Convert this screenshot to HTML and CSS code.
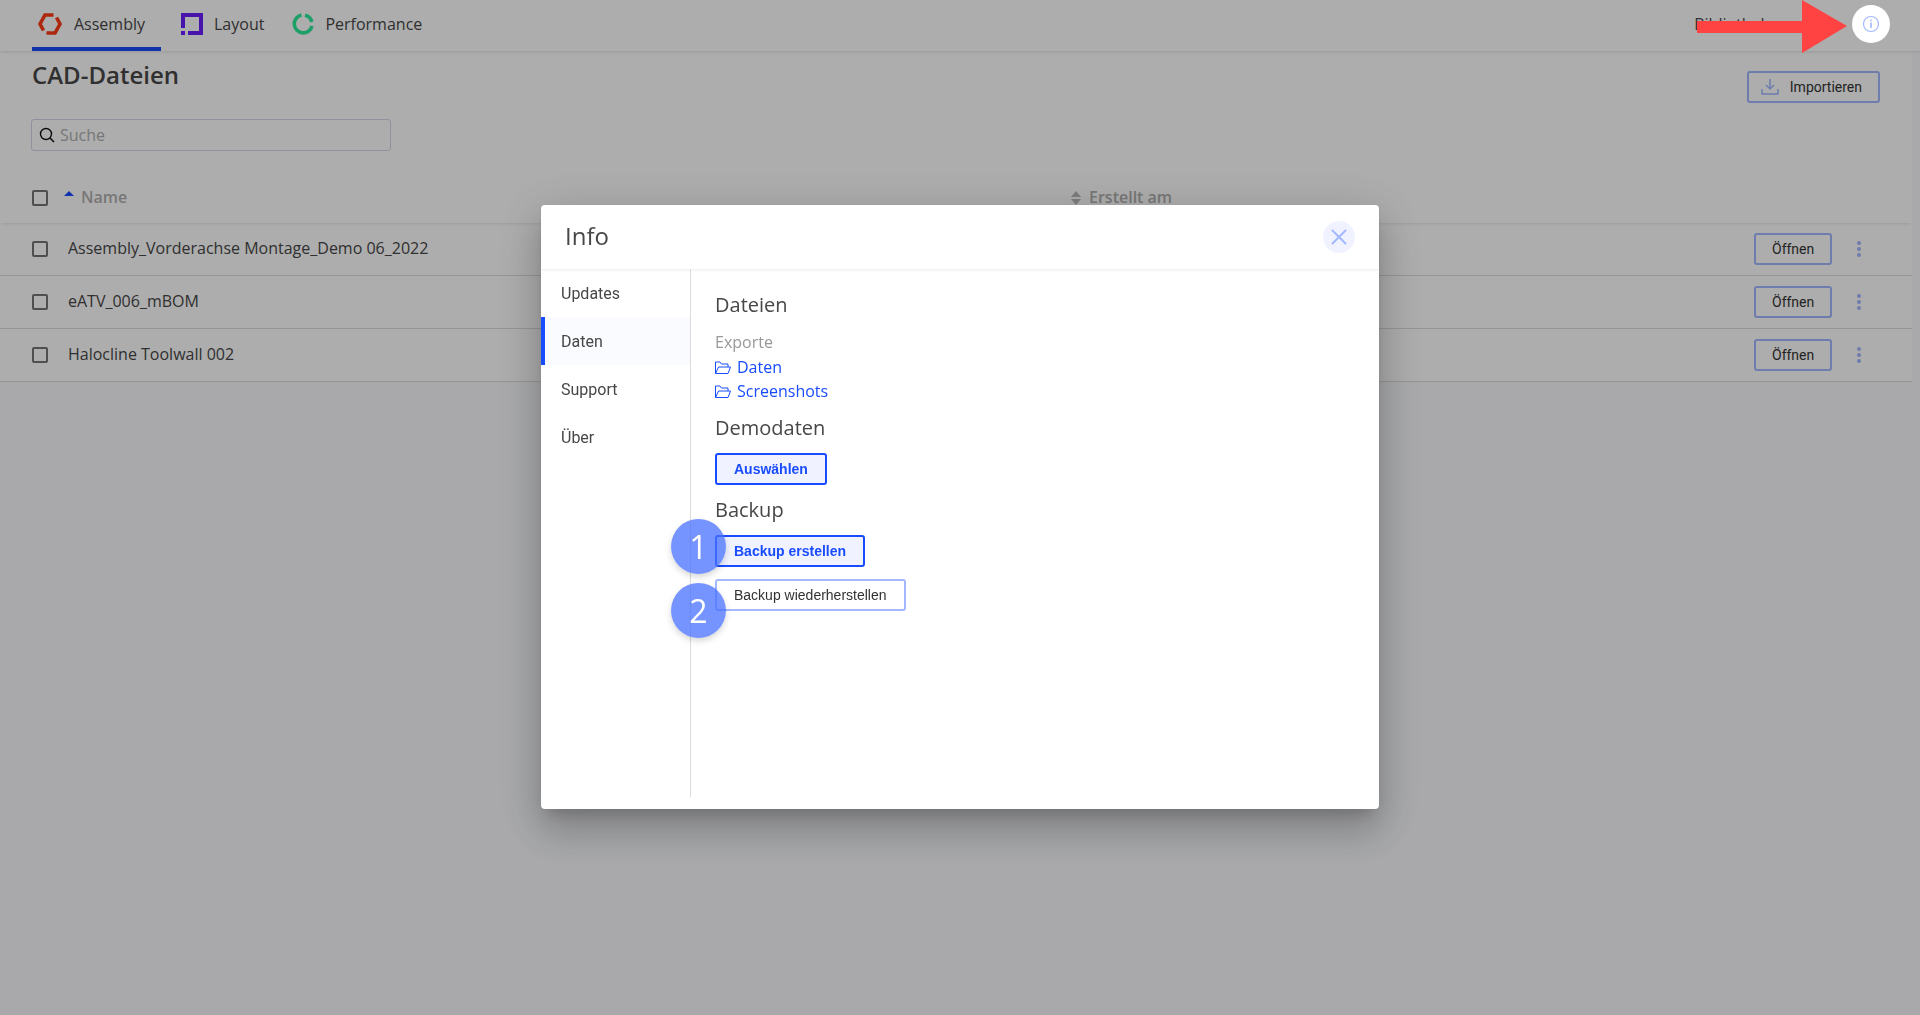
FILE: index.html
```html
<!DOCTYPE html>
<html lang="de">
<head>
<meta charset="utf-8">
<title>CAD-Dateien</title>
<link rel="stylesheet" href="styles.css">
</head>
<body>
<svg class="sprite" aria-hidden="true">
  <symbol id="folder" viewBox="0 0 16 16"><path d="M.5 14.500V3h4.500l1.500 2h6.500v3M.5 14.500l3-6.500h12l-2.500 6.500z" fill="none" stroke="currentColor" stroke-linejoin="round"/></symbol>
</svg>
<header class="topbar">
  <nav class="tabs">
    <a class="tab tab-active" href="#assembly">
      <svg class="tab-icon" width="26" height="24" viewBox="0 0 26 24"><path d="M16.500 3H8L3 12l3.500 6.500" fill="none" stroke="#ff3a15" stroke-width="3.600"/><path d="M9.500 21H18l5-9-3.500-6.500" fill="none" stroke="#ff3a15" stroke-width="3.600"/></svg>
      Assembly
    </a>
    <a class="tab" href="#layout">
      <svg class="tab-icon" width="22" height="22" viewBox="0 0 22 22"><path d="M2 15V2h18v18H7" fill="none" stroke="#6a1cff" stroke-width="4"/><path d="M0 18h4v4H0z" fill="#6a1cff"/></svg>
      Layout
    </a>
    <a class="tab" href="#performance">
      <svg class="tab-icon" width="22" height="22" viewBox="0 0 22 22"><path d="M9.500 2A9 9 0 1 0 20 13M13 2.200a9 9 0 0 1 6.800 6.800" fill="none" stroke="#2eeb9a" stroke-width="3.600"/></svg>
      Performance
    </a>
  </nav>
  <a class="library" href="#bibliothek">Bibliothek</a>
  <button class="info-button" type="button" aria-label="Info">
    <svg width="18" height="18" viewBox="0 0 18 18"><circle cx="9" cy="9" r="7.500" fill="none" stroke="#a3b8ff" stroke-width="1.200"/><path d="M9 7.500v5.500M9 4.800v1.500" stroke="#a3b8ff" stroke-width="1.600"/></svg>
  </button>
</header>

<main class="page">
  <section class="heading-row">
    <h1 class="title">CAD-Dateien</h1>
    <button class="button import-button" type="button">
      <svg width="18" height="18" viewBox="0 0 18 18"><path d="M1 11v5h16v-5M9 1v10M5 7l4 4 4-4" fill="none" stroke="#a3b8ff" stroke-width="1.500"/></svg>
      Importieren
    </button>
  </section>
  <label class="search">
    <svg width="16" height="16" viewBox="0 0 16 16"><circle cx="7" cy="7" r="5.500" fill="none" stroke="#111" stroke-width="1.400"/><path d="M11 11l4 4" stroke="#111" stroke-width="1.600"/></svg>
    <input class="search-input" type="text" placeholder="Suche" aria-label="Suche">
  </label>
  <table class="files">
    <thead>
      <tr>
        <th class="col-check"><input class="check" type="checkbox" aria-label="Alle auswählen"></th>
        <th class="col-name"><svg class="sort-up" width="10" height="6" viewBox="0 0 10 6"><path d="M5 0l5 5H0z" fill="#194cff"/></svg>Name</th>
        <th class="col-date"><svg class="sort-both" width="10" height="14" viewBox="0 0 10 14"><path d="M5 0l5 6H0zM0 8h10l-5 6z" fill="#b8b8b8"/></svg>Erstellt am</th>
        <th class="col-actions"></th>
      </tr>
    </thead>
    <tbody>
      <tr>
        <td><input class="check" type="checkbox" aria-label="Assembly_Vorderachse Montage_Demo 06_2022"></td>
        <td class="cell-name">Assembly_Vorderachse Montage_Demo 06_2022</td>
        <td></td>
        <td><div class="actions"><button class="button" type="button">Öffnen</button><button class="more" type="button" aria-label="Mehr"><i></i><i></i><i></i></button></div></td>
      </tr>
      <tr>
        <td><input class="check" type="checkbox" aria-label="eATV_006_mBOM"></td>
        <td class="cell-name">eATV_006_mBOM</td>
        <td></td>
        <td><div class="actions"><button class="button" type="button">Öffnen</button><button class="more" type="button" aria-label="Mehr"><i></i><i></i><i></i></button></div></td>
      </tr>
      <tr>
        <td><input class="check" type="checkbox" aria-label="Halocline Toolwall 002"></td>
        <td class="cell-name">Halocline Toolwall 002</td>
        <td></td>
        <td><div class="actions"><button class="button" type="button">Öffnen</button><button class="more" type="button" aria-label="Mehr"><i></i><i></i><i></i></button></div></td>
      </tr>
    </tbody>
  </table>
</main>

<div class="backdrop">
  <section class="dialog" role="dialog" aria-labelledby="dialog-title">
    <header class="dialog-header">
      <h2 class="dialog-title" id="dialog-title">Info</h2>
      <button class="close" type="button" aria-label="Schließen">
        <svg width="16" height="16" viewBox="0 0 16 16"><path d="M1.500 1.500l13 13M14.500 1.500l-13 13" stroke="#a3b8ff" stroke-width="2" stroke-linecap="round"/></svg>
      </button>
    </header>
    <div class="dialog-body">
      <nav class="side">
        <a class="side-item" href="#updates">Updates</a>
        <a class="side-item side-active" href="#daten">Daten</a>
        <a class="side-item" href="#support">Support</a>
        <a class="side-item" href="#ueber">Über</a>
      </nav>
      <div class="content">
        <h3 class="section-title">Dateien</h3>
        <p class="caption">Exporte</p>
        <a class="folder-link" href="#export-daten"><svg width="16" height="16"><use href="#folder"/></svg>Daten</a>
        <a class="folder-link" href="#export-screenshots"><svg width="16" height="16"><use href="#folder"/></svg>Screenshots</a>
        <h3 class="section-title">Demodaten</h3>
        <button class="button button-primary" type="button">Auswählen</button>
        <h3 class="section-title">Backup</h3>
        <div class="step"><button class="button button-primary" type="button">Backup erstellen</button><span class="badge badge-first">1</span></div>
        <div class="step"><button class="button" type="button">Backup wiederherstellen</button><span class="badge badge-second">2</span></div>
      </div>
    </div>
  </section>
</div>
<svg class="arrow" width="150" height="53" viewBox="0 0 150 53" aria-hidden="true"><path d="M0 21h105V0l45 26-45 27V33H0z" fill="#ff4343"/></svg>
</body>
</html>
```
FILE: styles.css
```css
* { box-sizing: border-box; }

body {
  margin: 0;
  min-height: 100vh;
  background: #f9fafd;
  color: #474747;
  font: 16px/24px "Open Sans", "Noto Sans", sans-serif;
}

a { color: inherit; text-decoration: none; }
h1, h2, h3, p { margin: 0; }
button { padding: 0; border: 0; background: none; cursor: pointer; }
.sprite { display: none; }

.topbar {
  position: relative;
  display: flex;
  align-items: center;
  height: 51px;
  padding: 0 30px 0 32px;
  background: #fff;
  box-shadow: 0 1px 3px rgba(0, 0, 0, 0.12);
}
.tabs { display: flex; align-self: stretch; gap: 12px; }
.tab {
  display: flex;
  align-items: center;
  gap: 11px;
  padding: 0 8px;
  border-bottom: 4px solid transparent;
}
.tab-active { padding: 0 16px 0 5px; border-color: #194cff; }
.library { margin: 0 83px 3px auto; }
.info-button {
  position: relative;
  display: flex;
  align-items: center;
  justify-content: center;
  width: 38px;
  height: 38px;
  margin-bottom: 3px;
  border-radius: 50%;
  background: #fff;
  z-index: 2;
}

.page { margin-right: 8px; background: #fff; }
.heading-row {
  display: flex;
  justify-content: space-between;
  height: 68px;
  padding: 8px 32px 0;
}
.title { font-size: 24px; line-height: 32px; font-weight: 600; }

.button {
  height: 32px;
  padding: 0 16px;
  border: 2px solid #a3b8ff;
  border-radius: 3px;
  color: #333;
  font: 14px/20px Roboto, "Liberation Sans", sans-serif;
}
.content .button { padding: 0 17px; font-family: "Liberation Sans", sans-serif; }
.button-primary {
  border-color: #194cff;
  background: #f0f2ff;
  color: #194cff;
}
.content .button-primary { font-weight: 700; }
.import-button {
  display: flex;
  align-items: center;
  gap: 11px;
  margin-top: 12px;
  padding: 0 16px 0 12px;
}

.search {
  display: flex;
  align-items: center;
  gap: 5px;
  width: 360px;
  height: 32px;
  margin-left: 31px;
  padding: 0 7px;
  border: 1px solid #d5d6e6;
  border-radius: 3px;
}
.search-input {
  flex: 1;
  min-width: 0;
  padding: 0;
  border: 0;
  outline: 0;
  background: none;
  font: inherit;
}
.search-input::placeholder { color: #b0b0b0; }

.files { width: 100%; border-spacing: 0; table-layout: fixed; }
.files thead { box-shadow: 0 3px 3px -2px rgba(0, 0, 0, 0.1); }
.files th {
  height: 72px;
  padding: 22px 0 0;
  text-align: left;
  vertical-align: middle;
  color: #b0b0b0;
  font-weight: 600;
}
.files td { height: 53px; padding: 0; border-bottom: 1px solid #dcdcdc; }
.files .cell-name { padding-bottom: 2px; }
.files th.col-name, .files th.col-date { padding-top: 19px; }
.col-check { width: 68px; }
.col-name { width: 1003px; }
.col-actions { width: 168px; }
.check {
  display: block;
  width: 16px;
  height: 16px;
  margin: 0 0 0 32px;
  appearance: none;
  border: 2px solid #757575;
  border-radius: 2px;
}
.sort-up { margin: 0 7px 6px -4px; }
.sort-both { margin: 0 8px 0 0; vertical-align: -2px; }
.actions { display: flex; align-items: center; gap: 23px; padding-left: 10px; }
.more {
  display: flex;
  flex-direction: column;
  align-items: center;
  gap: 2px;
  width: 8px;
}
.more i { width: 4px; height: 4px; border-radius: 50%; background: #a3b8ff; }

.backdrop {
  position: fixed;
  inset: 0;
  z-index: 1;
  display: flex;
  align-items: center;
  justify-content: center;
  padding-bottom: 1px;
  background: rgba(0, 0, 0, 0.32);
}
.dialog {
  display: flex;
  flex-direction: column;
  width: 838px;
  max-width: 90%;
  min-height: 604px;
  padding-bottom: 12px;
  border-radius: 4px;
  background: #fff;
  box-shadow: 0 11px 15px -7px rgba(0, 0, 0, 0.2), 0 24px 38px 3px rgba(0, 0, 0, 0.14), 0 9px 46px 8px rgba(0, 0, 0, 0.12);
}
.dialog-header {
  display: flex;
  align-items: center;
  justify-content: space-between;
  height: 64px;
  padding: 0 24px;
  box-shadow: 0 1px 3px rgba(0, 0, 0, 0.08);
}
.dialog-title { padding-bottom: 2px; font-size: 24px; line-height: 32px; font-weight: 400; }
.close {
  display: flex;
  align-items: center;
  justify-content: center;
  width: 32px;
  height: 32px;
  border-radius: 50%;
  background: #f0f2ff;
}
.dialog-body { display: flex; flex: 1; }
.side { width: 150px; border-right: 1px solid #dcdcdc; }
.side-item {
  display: block;
  height: 48px;
  padding: 0 16px;
  border-left: 4px solid transparent;
  line-height: 50px;
  font-family: Roboto, sans-serif;
}
.side-active { border-color: #194cff; background: #fafbff; }
.content {
  display: flex;
  flex-direction: column;
  align-items: flex-start;
  padding: 24px;
}
.section-title { margin-bottom: 13px; font-size: 20px; line-height: 24px; font-weight: 400; }
.caption { margin-bottom: 1px; color: #999; }
.folder-link { display: flex; align-items: center; gap: 6px; color: #194cff; font-weight: 500; }
.folder-link + .section-title, .button + .section-title { margin-top: 13px; }
.step { position: relative; margin-bottom: 12px; }
.badge {
  position: absolute;
  left: -44px;
  width: 55px;
  height: 55px;
  border-radius: 50%;
  background: rgba(71, 112, 255, 0.75);
  box-shadow: 0 3px 6px rgba(0, 0, 0, 0.16);
  color: #fff;
  font-size: 32px;
  line-height: 55px;
  text-align: center;
}
.badge-first { top: -16px; }
.badge-second { top: 4px; }

.arrow { position: absolute; top: 0; right: 73px; z-index: 3; }
```
